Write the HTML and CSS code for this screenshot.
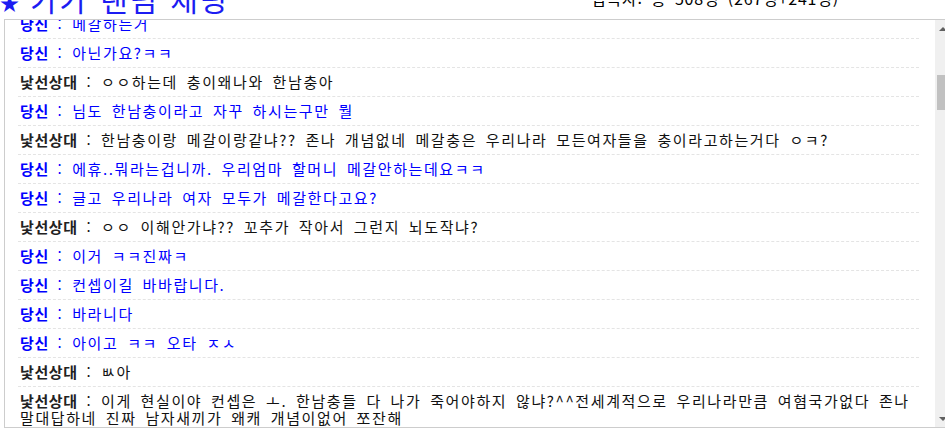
FILE: index.html
```html
<!DOCTYPE html>
<html lang="ko">
<head>
<meta charset="utf-8">
<title>가가 랜덤 채팅</title>
<link rel="stylesheet" href="styles.css">
</head>
<body>
<div class="page">
  <header class="top">
    <h1 class="title"><span class="star">★</span> 가가 랜덤 채팅</h1>
    <div class="count">접속자: 총 508명 (267명+241명)</div>
  </header>
  <section class="chat-box">
    <div class="chat-scroll">
      <ul class="chat-list">
        <li class="msg me"><b class="who">당신</b> : 메갈하는거</li>
        <li class="msg me"><b class="who">당신</b> : 아닌가요?ㅋㅋ</li>
        <li class="msg other"><b class="who">낯선상대</b> : ㅇㅇ하는데 충이왜나와 한남충아</li>
        <li class="msg me"><b class="who">당신</b> : 님도 한남충이라고 자꾸 하시는구만 뭘</li>
        <li class="msg other"><b class="who">낯선상대</b> : 한남충이랑 메갈이랑같냐?? 존나 개념없네 메갈충은 우리나라 모든여자들을 충이라고하는거다 ㅇㅋ?</li>
        <li class="msg me"><b class="who">당신</b> : 에휴..뭐라는겁니까. 우리엄마 할머니 메갈안하는데요ㅋㅋ</li>
        <li class="msg me"><b class="who">당신</b> : 글고 우리나라 여자 모두가 메갈한다고요?</li>
        <li class="msg other"><b class="who">낯선상대</b> : ㅇㅇ 이해안가냐?? 꼬추가 작아서 그런지 뇌도작냐?</li>
        <li class="msg me"><b class="who">당신</b> : 이거 ㅋㅋ진짜ㅋ</li>
        <li class="msg me"><b class="who">당신</b> : 컨셉이길 바바랍니다.</li>
        <li class="msg me"><b class="who">당신</b> : 바라니다</li>
        <li class="msg me"><b class="who">당신</b> : 아이고 ㅋㅋ 오타 ㅈㅅ</li>
        <li class="msg other"><b class="who">낯선상대</b> : ㅄ아</li>
        <li class="msg other"><b class="who">낯선상대</b> : 이게 현실이야 컨셉은 ㅗ. 한남충들 다 나가 죽어야하지 않냐?^^전세계적으로 우리나라만큼 여혐국가없다 존나<br>말대답하네 진짜 남자새끼가 왜캐 개념이없어 쪼잔해</li>
      </ul>
    </div>
    <div class="scrollbar">
      <span class="btn"><span class="arrow up"></span></span>
      <span class="track"><span class="thumb"></span></span>
      <span class="btn"><span class="arrow down"></span></span>
    </div>
  </section>
</div>
</body>
</html>
```

FILE: styles.css
```css
html, body {
  margin: 0;
  padding: 0;
  height: 100%;
  overflow: hidden;
  background: #fff;
}
body {
  font-family: "Noto Sans CJK KR", "Noto Sans", sans-serif;
  color: #111;
}
.page {
  display: flex;
  flex-direction: column;
}
.top {
  height: 19px;
  display: flex;
  align-items: flex-start;
}
.title {
  margin: -17px 0 0 0;
  font-size: 30px;
  line-height: 30px;
  font-weight: normal;
  color: #1c1cf2;
  white-space: nowrap;
  word-spacing: 1px;
  letter-spacing: 1.8px;
}
.star {
  font-size: 19px;
  letter-spacing: 0;
}
.count {
  margin: -10px 0 0 362px;
  font-size: 16px;
  line-height: 16px;
  color: #000;
  white-space: nowrap;
  word-spacing: 3px;
  letter-spacing: 0.8px;
}
.chat-box {
  margin-left: 4px;
  height: 407px;
  border-top: 1px solid #cdcdcd;
  border-left: 1px solid #cdcdcd;
  border-bottom: 1px solid #cdcdcd;
  display: flex;
}
.chat-scroll {
  flex: 1;
  overflow: hidden;
  padding: 0 16px 0 13px;
}
.chat-list {
  list-style: none;
  margin: -10px 0 0 0;
  padding: 0;
}
.msg {
  padding: 5px 2px 6px;
  font-size: 15px;
  line-height: 17px;
  border-bottom: 1px dashed #e4e4e4;
  white-space: nowrap;
  word-spacing: 3px;
  letter-spacing: 1.6px;
}
.msg.me {
  color: #0000ff;
}
.msg.other {
  color: #111;
}
.msg.other .who {
  color: #222;
}
.who {
  font-weight: bold;
  word-spacing: 0;
  letter-spacing: 0.6px;
}
.scrollbar {
  width: 10px;
  background: #f0f0f0;
  display: flex;
  flex-direction: column;
  overflow: hidden;
}
.btn {
  height: 17px;
  display: flex;
  align-items: center;
  padding-left: 4px;
}
.arrow {
  width: 0;
  height: 0;
  border-left: 4px solid transparent;
  border-right: 4px solid transparent;
}
.arrow.up {
  border-bottom: 4px solid #606060;
}
.arrow.down {
  border-top: 4px solid #606060;
}
.track {
  flex: 1;
  display: flex;
  flex-direction: column;
}
.thumb {
  margin: 38px 0 0 2px;
  height: 35px;
  background: #c1c1c1;
}
```
